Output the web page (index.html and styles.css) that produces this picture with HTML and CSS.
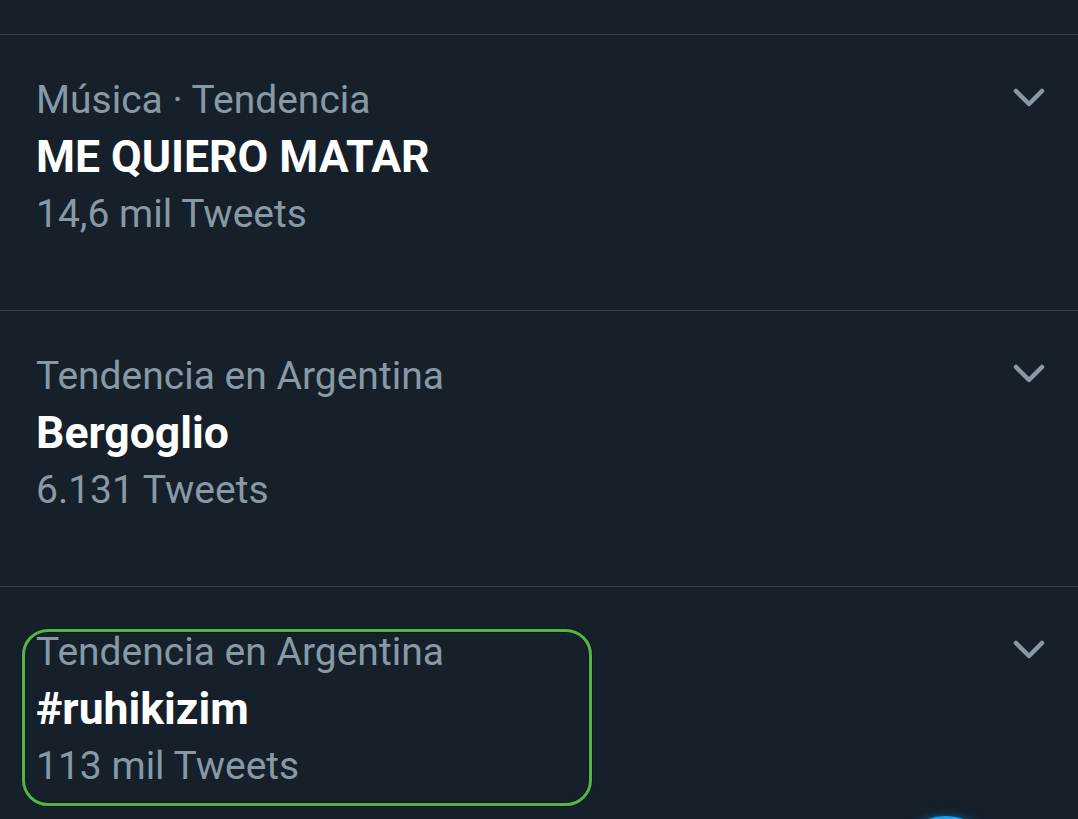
FILE: index.html
```html
<!DOCTYPE html>
<html lang="es">
<head>
<meta charset="utf-8">
<link rel="stylesheet" href="styles.css">
</head>
<body>
<div class="page">
  <div class="top-space"></div>
  <div class="trend">
    <div class="trend-text">
      <div class="meta">Música · Tendencia</div>
      <div class="title">ME QUIERO MATAR</div>
      <div class="count">14,6 mil Tweets</div>
    </div>
    <svg class="chevron" viewBox="0 0 34 22" width="34" height="22"><polyline points="4,4 17,17 30,4" /></svg>
  </div>
  <div class="trend">
    <div class="trend-text">
      <div class="meta">Tendencia en Argentina</div>
      <div class="title">Bergoglio</div>
      <div class="count">6.131 Tweets</div>
    </div>
    <svg class="chevron" viewBox="0 0 34 22" width="34" height="22"><polyline points="4,4 17,17 30,4" /></svg>
  </div>
  <div class="trend highlighted">
    <div class="trend-text">
      <div class="meta">Tendencia en Argentina</div>
      <div class="title">#ruhikizim</div>
      <div class="count">113 mil Tweets</div>
    </div>
    <svg class="chevron" viewBox="0 0 34 22" width="34" height="22"><polyline points="4,4 17,17 30,4" /></svg>
    <div class="annotation"></div>
  </div>
  <div class="fab"></div>
</div>
</body>
</html>
```
FILE: styles.css
```css
html, body {
  margin: 0;
  padding: 0;
  background: #16202b;
}
body {
  font-family: Roboto, "Noto Sans", Arial, sans-serif;
  overflow: hidden;
  height: 819px;
}
.page {
  position: relative;
  width: 1078px;
  height: 819px;
  overflow: hidden;
}
.top-space {
  height: 34px;
}
.trend {
  position: relative;
  display: flex;
  align-items: flex-start;
  border-top: 1px solid #38444d;
  height: 275px;
  box-sizing: content-box;
  padding: 0 32px 0 36px;
}
.trend-text {
  flex: 1;
  padding-top: 37px;
}
.meta, .count {
  color: #8899a6;
  font-size: 39px;
  line-height: 56px;
  white-space: nowrap;
}
.title {
  color: #ffffff;
  font-size: 44.5px;
  font-weight: 700;
  line-height: 58px;
  white-space: nowrap;
}
.chevron {
  margin-top: 52px;
  fill: none;
  stroke: #8899a6;
  stroke-width: 4.5;
  stroke-linecap: round;
  stroke-linejoin: round;
}
.annotation {
  position: absolute;
  left: 22px;
  top: 42px;
  width: 570px;
  height: 177px;
  box-sizing: border-box;
  border: 3px solid #55b34a;
  border-radius: 26px;
  box-shadow: 0 0 0 1px #0e1a10, inset 0 0 0 1px #0e1a10;
}
.fab {
  position: absolute;
  left: 890px;
  top: 816px;
  width: 112px;
  height: 112px;
  border-radius: 50%;
  background: #1da1f2;
  box-shadow: 0 0 8px rgba(29, 161, 242, 0.4);
}
```
